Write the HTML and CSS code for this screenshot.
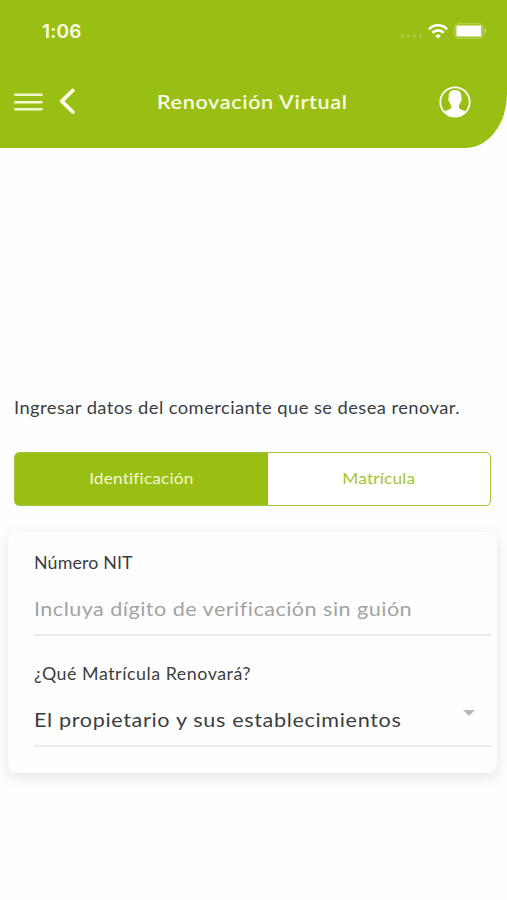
FILE: index.html
```html
<!DOCTYPE html>
<html lang="es">
<head>
<meta charset="utf-8">
<meta name="viewport" content="width=device-width, initial-scale=1">
<title>Renovación Virtual</title>
<link rel="stylesheet" href="styles.css">
</head>
<body>
<header class="header">
  <div class="status">
    <span class="time">1:06</span>
    <div class="indicators">
      <span class="signal"><i></i><i></i><i></i><i></i></span>
      <svg class="wifi" width="20" height="15" viewBox="0 0 20 15" fill="none" stroke="#fff" stroke-width="2.7">
        <path d="M.9 5.2C6-.1 14-.1 19.1 5.2"/>
        <path d="M4.3 8.7c3.2-3.2 8.200-3.200 11.400 0"/>
        <path d="M10 14.600 7.200 11.700c1.600-1.500 4-1.500 5.600 0z" fill="#fff" stroke="none"/>
      </svg>
      <svg class="battery" width="33" height="16" viewBox="0 0 33 16">
        <rect x=".8" y=".8" width="28" height="14.400" rx="4" fill="none" stroke="#bcd65f" stroke-width="1.100"/>
        <rect x="2.400" y="2.600" width="24.800" height="10.800" rx="1" fill="#fff"/>
        <path d="M30.500 5.400c2.200 1 2.200 4.200 0 5.200z" fill="#c5dc75"/>
      </svg>
    </div>
  </div>
  <nav class="bar">
    <div class="left">
      <svg width="30" height="20" viewBox="0 0 30 20" stroke="#f3f9cf" stroke-width="2.600" stroke-linecap="round"><path d="M1.300 2.700h26.200M1.300 10.200h26.200M1.300 17.200h26.200"/></svg>
      <svg class="back" width="18" height="28" viewBox="0 0 18 28" fill="none" stroke="#fbfeea" stroke-width="3.800" stroke-linecap="round" stroke-linejoin="round"><path d="M13.800 2.500 2.800 13.200l11 10.800"/></svg>
    </div>
    <h1 class="title"><span class="wide">Renovación Virtual</span></h1>
    <svg class="user" width="32" height="32" viewBox="0 0 32 32">
      <circle cx="16" cy="16" r="14.700" fill="none" stroke="#fff" stroke-width="1.800"/>
      <path d="M16 4c4.600 0 6.500 2.800 6.300 6.800-.1 1.100.5 1.400.4 2.600-.1 1.400-.8 1.900-1.200 2.300-.3 2-1 2.900-1.600 3.600v2.900c1.600 1.500 5 1.700 7 3.900C23.600 28.900 20 30.500 16 30.500S8.400 28.900 5.100 26.100c2-2.200 5.400-2.400 7-3.900v-2.900c-.6-.7-1.300-1.600-1.600-3.600-.4-.4-1.100-.9-1.200-2.300-.1-1.200.5-1.500.4-2.600C9.500 6.800 11.400 4 16 4z" fill="#fff"/>
    </svg>
  </nav>
</header>
<main class="main">
  <p class="intro"><span class="wide">Ingresar datos del comerciante que se desea renovar.</span></p>
  <div class="tabs">
    <div class="tab active"><span class="wide center">Identificación</span></div>
    <div class="tab"><span class="wide center">Matrícula</span></div>
  </div>
  <section class="card">
    <div class="field">
      <div class="label"><span class="wide">Número NIT</span></div>
      <div class="value hint"><span class="wide">Incluya dígito de verificación sin guión</span></div>
    </div>
    <div class="field">
      <div class="label question"><span class="wide">¿Qué Matrícula Renovará?</span></div>
      <div class="value chosen"><span class="wide">El propietario y sus establecimientos</span><i class="caret"></i></div>
    </div>
  </section>
</main>
</body>
</html>
```
FILE: styles.css
```css
* { box-sizing: border-box; }
body { margin: 0; height: 900px; background: #fdfeff; font-family: Lato, sans-serif; color: #3b3e3e; overflow: hidden; }
svg { display: block; }
.wide { display: inline-block; transform: scaleX(1.08); transform-origin: left; }
.center { transform-origin: center; }
.header { height: 148px; background: #9abf14; border-radius: 0 0 42px 0 / 0 0 54px 0; }
.status { height: 62px; padding: 0 20px 0 42px; display: flex; justify-content: space-between; align-items: center; }
.time { padding-top: 2px; font: 600 19px/24px Inter, sans-serif; letter-spacing: .2px; color: #f9fde8; }
.indicators { display: flex; align-items: center; }
.signal { display: flex; gap: 2.500px; margin: 10px 6px 0 0; }
.signal i { width: 3.500px; height: 3.500px; border-radius: 50%; background: #adcb45; }
.battery { margin-left: 6px; }
.bar { height: 80px; padding: 0 36px 0 14px; display: flex; align-items: center; justify-content: space-between; }
.left { display: flex; align-items: center; gap: 15px; width: 80px; }
.title { margin: -2px 0 0; width: 191px; font-size: 20px; line-height: 26px; font-weight: 600; color: #f7fce0; white-space: nowrap; letter-spacing: .57px; }
.user { margin-left: 29px; }
.main { padding: 246px 10px 0 8px; }
.intro { margin: 0 6px; font-size: 17px; line-height: 28px; letter-spacing: .39px; white-space: nowrap; }
.tabs { height: 54px; margin: 30px 6px 26px 6px; display: grid; grid-template-columns: 253px 1fr; border: 1px solid #a3c338; border-radius: 5px; overflow: hidden; background: #fefffe; }
.tab { display: flex; align-items: center; justify-content: center; padding: 0 1px 3px 0; font-size: 16px; letter-spacing: .15px; color: #a5c52d; }
.active { background: #9abf14; color: #f4facf; }
.card { height: 241px; padding: 17px 6px 0 26px; border-radius: 9px; background: #fefefe; box-shadow: 0 4px 14px rgba(50,55,75,.13); }
.field { height: 111px; }
.label { font-size: 16.500px; line-height: 28px; letter-spacing: .13px; white-space: nowrap; }
.question { letter-spacing: .5px; }
.value { display: flex; justify-content: space-between; height: 59px; padding-top: 15px; border-bottom: 2px solid #ebebed; font-size: 20px; line-height: 32px; letter-spacing: .43px; white-space: nowrap; }
.hint { color: #a1a3a4; }
.chosen { letter-spacing: .6px; }
.caret { margin: 7px 16px 0 0; width: 0; height: 0; border: 6px solid transparent; border-top-color: #b7b8bb; }
```
